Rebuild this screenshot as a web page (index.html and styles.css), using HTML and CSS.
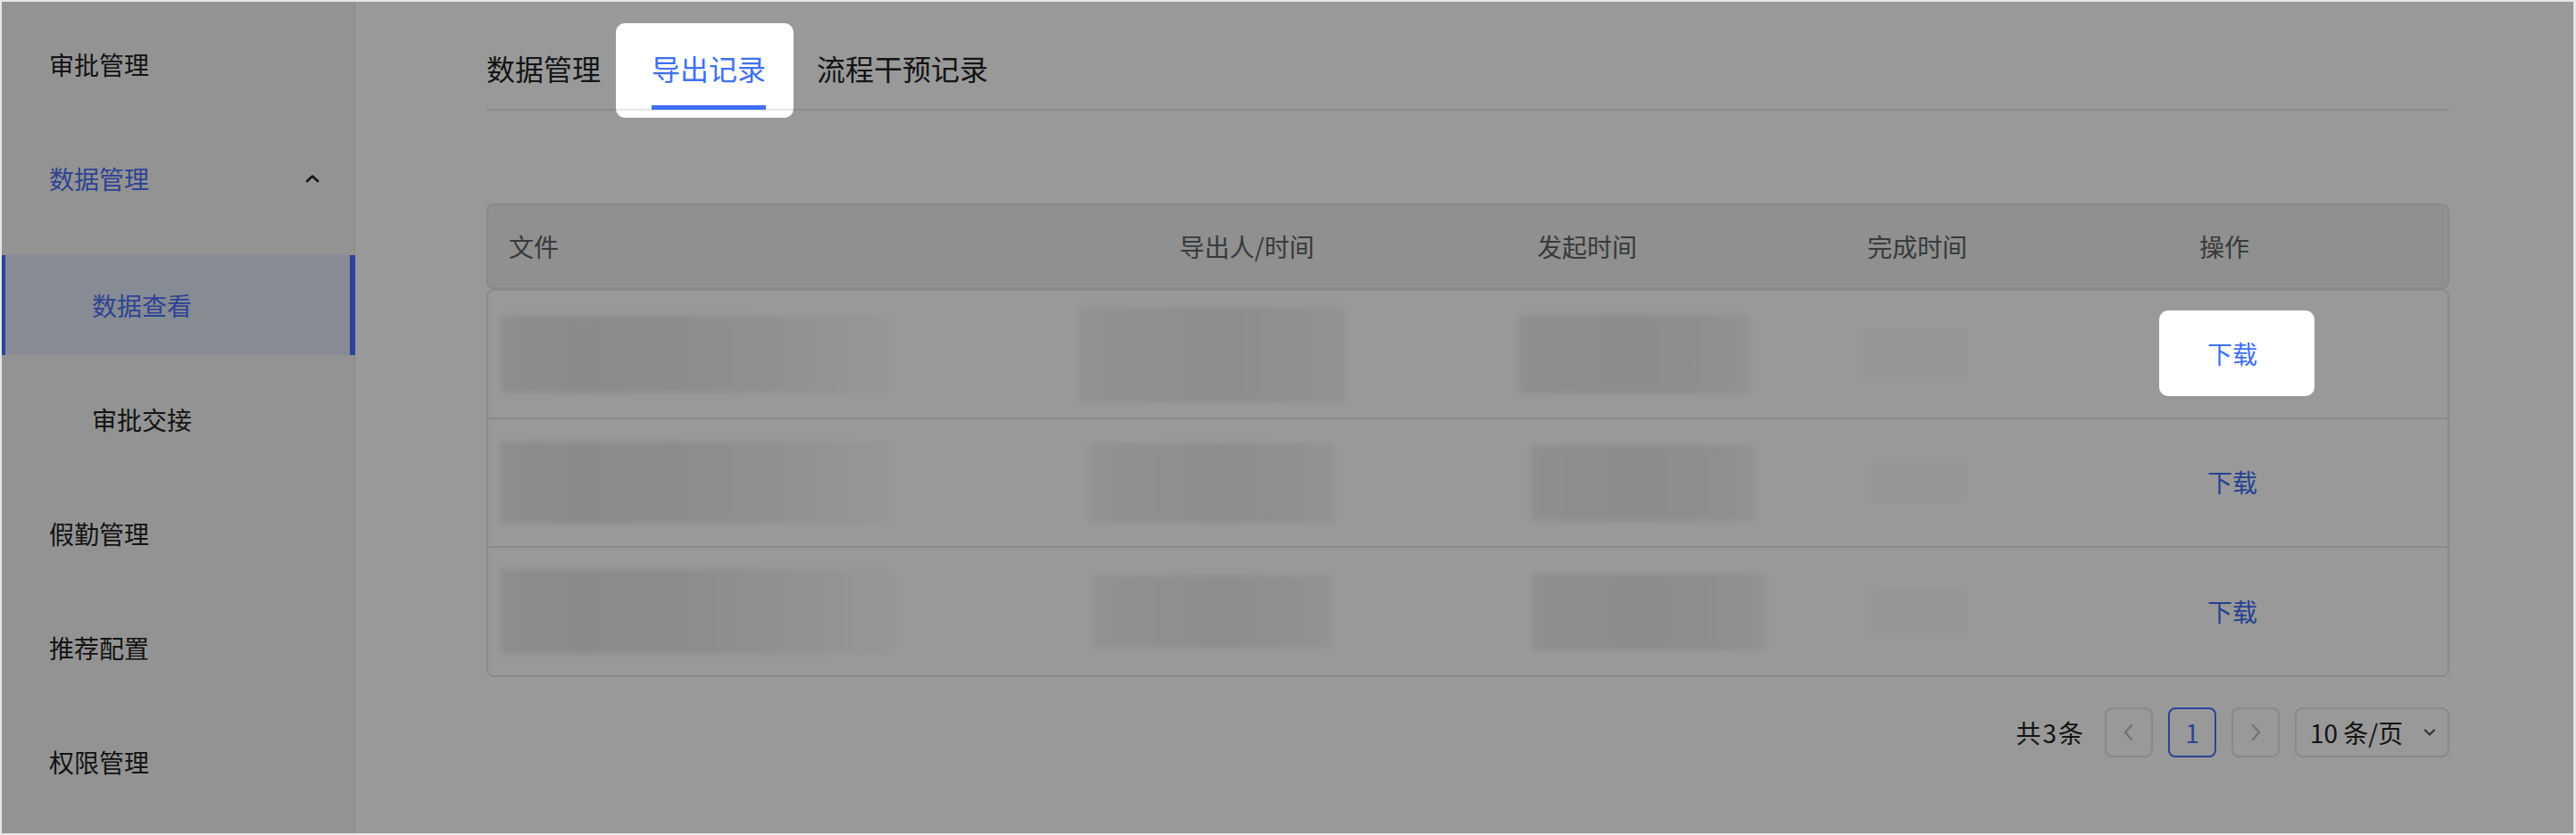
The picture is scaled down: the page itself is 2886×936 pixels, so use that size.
FILE: index.html
```html
<!DOCTYPE html>
<html lang="zh-CN">
<head>
<meta charset="utf-8">
<title>导出记录</title>
<link rel="stylesheet" href="styles.css">
</head>
<body>
<div class="frame">
  <aside class="sidebar">
    <div class="menu-item">审批管理</div>
    <div class="menu-item open">
      <span>数据管理</span>
      <svg class="caret" width="16" height="10" viewBox="0 0 16 10"><polyline points="2,8 8,2.5 14,8" fill="none" stroke="#222" stroke-width="2.6" stroke-linecap="round" stroke-linejoin="round"/></svg>
    </div>
    <div class="submenu">
      <div class="sub-item active">数据查看</div>
      <div class="sub-item">审批交接</div>
    </div>
    <div class="menu-item">假勤管理</div>
    <div class="menu-item">推荐配置</div>
    <div class="menu-item">权限管理</div>
  </aside>

  <main class="main">
    <nav class="tabs">
      <div class="tab">数据管理</div>
      <div class="tab active">导出记录</div>
      <div class="tab">流程干预记录</div>
    </nav>

    <section class="table">
      <div class="thead">
        <div class="th c1">文件</div>
        <div class="th">导出人/时间</div>
        <div class="th">发起时间</div>
        <div class="th">完成时间</div>
        <div class="th">操作</div>
      </div>
      <div class="tbody">
        <div class="tr">
          <div class="mask file r1a"></div>
          <div class="mask person r1b"></div>
          <div class="mask start r1c"></div>
          <div class="mask done r1d"></div>
          <div class="op"><span class="link">下载</span></div>
        </div>
        <div class="tr">
          <div class="mask file r2a"></div>
          <div class="mask person r2b"></div>
          <div class="mask start r2c"></div>
          <div class="mask done r2d"></div>
          <div class="op"><span class="link">下载</span></div>
        </div>
        <div class="tr last">
          <div class="mask file r3a"></div>
          <div class="mask person r3b"></div>
          <div class="mask start r3c"></div>
          <div class="mask done r3d"></div>
          <div class="op"><span class="link">下载</span></div>
        </div>
      </div>
    </section>

    <div class="pager">
      <span class="total">共3条</span>
      <span class="pg-btn">
        <svg width="14" height="22" viewBox="0 0 14 22"><polyline points="10,3 3,11 10,19" fill="none" stroke="#c0c0c0" stroke-width="2.4" stroke-linecap="round" stroke-linejoin="round"/></svg>
      </span>
      <span class="pg-btn current">1</span>
      <span class="pg-btn">
        <svg width="14" height="22" viewBox="0 0 14 22"><polyline points="4,3 11,11 4,19" fill="none" stroke="#c0c0c0" stroke-width="2.4" stroke-linecap="round" stroke-linejoin="round"/></svg>
      </span>
      <span class="size">
        <span>10 条/页</span>
        <svg width="16" height="10" viewBox="0 0 16 10"><polyline points="3,2.5 8,7.5 13,2.5" fill="none" stroke="#555" stroke-width="2.2" stroke-linecap="round" stroke-linejoin="round"/></svg>
      </span>
    </div>
  </main>

  <svg class="overlay" viewBox="0 0 2881 932" preserveAspectRatio="none">
    <path fill="rgba(0,0,0,0.4)" fill-rule="evenodd" d="M0 0H2881V932H0Z M698 24H877A10 10 0 0 1 887 34V120A10 10 0 0 1 877 130H698A10 10 0 0 1 688 120V34A10 10 0 0 1 698 24Z M2427 346H2581A10 10 0 0 1 2591 356V432A10 10 0 0 1 2581 442H2427A10 10 0 0 1 2417 432V356A10 10 0 0 1 2427 346Z"/>
  </svg>
</div>
</body>
</html>
```

FILE: styles.css
```css
* {
  box-sizing: border-box;
  margin: 0;
  padding: 0;
}

html,
body {
  width: 2886px;
  height: 936px;
  overflow: hidden;
  background: #fff;
}

body {
  font-family: "Noto Sans CJK SC", "Noto Sans", sans-serif;
  color: #222;
  line-height: 1;
}

.frame {
  position: relative;
  width: 2886px;
  height: 936px;
  border: 2px solid #e6e6e6;
  border-right-width: 3px;
  display: flex;
  background: #fff;
  overflow: hidden;
}

/* ---------- sidebar ---------- */
.sidebar {
  width: 396px;
  flex: none;
  background: #f5f5f5;
  border-right: 2px solid #ebebeb;
  padding-top: 14px;
}

.menu-item {
  height: 112px;
  display: flex;
  align-items: center;
  justify-content: space-between;
  padding: 0 38px 0 53px;
  margin-bottom: 16px;
  font-size: 28px;
  color: #222;
}

.menu-item.open {
  color: #4d70f5;
  margin-bottom: 30px;
}

.caret {
  display: block;
}

.sub-item {
  height: 112px;
  display: flex;
  align-items: center;
  padding-left: 101px;
  margin-bottom: 16px;
  font-size: 28px;
  color: #222;
}

.sub-item.active {
  background: #e1e8f7;
  color: #4d70f5;
  border-left: 4px solid #4871ff;
  border-right: 6px solid #4871ff;
  padding-left: 97px;
  margin-right: -2px;
}

/* ---------- main ---------- */
.main {
  flex: 1;
  padding: 50px 139px 0 147px;
}

.tabs {
  display: flex;
  gap: 57px;
  border-bottom: 2px solid #e5e5e5;
}

.tab {
  font-size: 32px;
  line-height: 48px;
  padding-bottom: 18px;
  border-bottom: 5px solid transparent;
  margin-bottom: -1px;
  color: #222;
}

.tab.active {
  color: #3e6ff4;
  border-bottom-color: #3e6ff4;
}

/* ---------- table ---------- */
.table {
  margin-top: 104px;
}

.thead {
  display: grid;
  grid-template-columns: 743px 214px 548px 192px 496px;
  align-items: center;
  height: 96px;
  border: 2px solid #e5e5e5;
  border-radius: 8px;
  background: #eef0ef;
  font-size: 28px;
  color: #5e6166;
}

.th {
  text-align: center;
}

.th.c1 {
  text-align: left;
  padding-left: 23px;
}

.tbody {
  border: 2px solid #e5e5e5;
  border-radius: 8px;
}

.tr {
  display: flex;
  align-items: center;
  height: 144px;
  border-bottom: 2px solid #e5e5e5;
}

.tr.last {
  height: 143px;
  border-bottom: none;
}

.op {
  margin-left: auto;
  width: 482px;
  text-align: center;
  font-size: 28px;
  padding-bottom: 2px;
}

.link {
  color: #3e6ff4;
}

/* blurred / redacted cell contents */
.mask {
  flex: none;
  filter: blur(3px);
}

.mask.file {
  background: linear-gradient(90deg, #ebecec 0%, #e6e7e8 20%, #e9eaea 45%, #eeefef 65%, #f6f6f6 85%, #fbfbfb 100%);
}

.mask.person {
  background: linear-gradient(90deg, #f3f3f3 0%, #efefef 30%, #eaebeb 55%, #efefef 75%, #f4f4f4 100%);
}

.mask.start {
  background: linear-gradient(90deg, #eeeeee 0%, #e9eaea 40%, #ebebeb 70%, #f4f4f4 100%);
}

.mask.done {
  background: #fafafa;
}

.r1a { margin-left: 14px; width: 436px; height: 86px; }
.r1b { margin-left: 212px; width: 298px; height: 107px; }
.r1c { margin-left: 195px; width: 258px; height: 88px; }
.r1d { margin-left: 125px; width: 118px; height: 56px; }

.r2a { margin-left: 14px; width: 436px; height: 92px; }
.r2b { margin-left: 224px; width: 273px; height: 89px; }
.r2c { margin-left: 221px; width: 252px; height: 85px; }
.r2d { margin-left: 127px; width: 109px; height: 43px; }

.r3a { margin-left: 14px; width: 442px; height: 95px; }
.r3b { margin-left: 220px; width: 268px; height: 81px; }
.r3c { margin-left: 226px; width: 261px; height: 86px; }
.r3d { margin-left: 116px; width: 109px; height: 53px; }

/* ---------- pagination ---------- */
.pager {
  display: flex;
  justify-content: flex-end;
  align-items: center;
  gap: 17px;
  margin-top: 34px;
  font-size: 28px;
  color: #222;
}

.total {
  margin-right: 5px;
  letter-spacing: 2px;
}

.pg-btn {
  width: 54px;
  height: 56px;
  border: 2px solid #e5e5e5;
  border-radius: 8px;
  display: flex;
  align-items: center;
  justify-content: center;
  color: #c0c0c0;
}

.pg-btn.current {
  border-color: #4871ff;
  color: #4871ff;
}

.size {
  width: 173px;
  height: 56px;
  border: 2px solid #e5e5e5;
  border-radius: 8px;
  display: flex;
  align-items: center;
  justify-content: space-between;
  padding: 0 12px 0 15px;
}

/* ---------- guide overlay ---------- */
.overlay {
  position: absolute;
  top: 0;
  left: 0;
  width: 100%;
  height: 100%;
  pointer-events: none;
}
```
